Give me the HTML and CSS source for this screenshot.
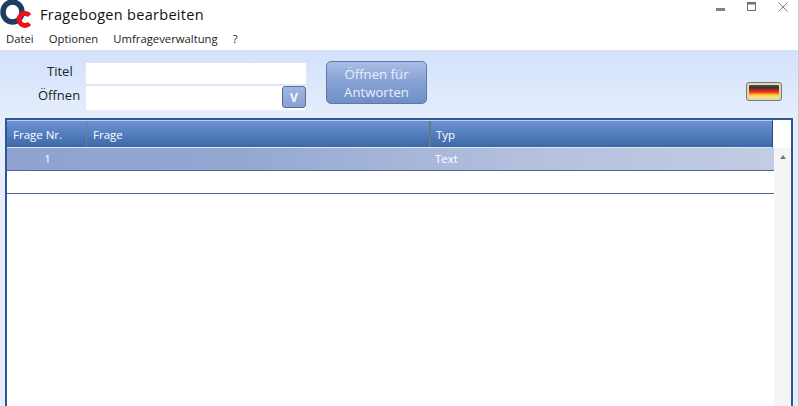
FILE: index.html
```html
<!DOCTYPE html>
<html lang="de">
<head>
    <meta charset="UTF-8">
    <title>Fragebogen bearbeiten</title>
    <link rel="stylesheet" href="styles.css">
</head>
<body>
    <div class="window">
        <div class="title-bar">
            <svg class="logo" width="32" height="30" viewBox="0 0 32 30">
                <ellipse cx="12.5" cy="12" rx="9.5" ry="10" fill="none" stroke="#1f3d63" stroke-width="5.5"/>
                <path d="M29.5 15.5 A6 6 0 1 0 29.5 23.5" fill="none" stroke="#ee1119" stroke-width="4.8"/>
            </svg>
            <span class="title-text">Fragebogen bearbeiten</span>
            <div class="window-buttons">
                <svg width="10" height="10" viewBox="0 0 10 10"><rect x="0" y="6" width="9" height="3" fill="#808080"/></svg>
                <svg width="10" height="10" viewBox="0 0 10 10"><rect x="0.5" y="0.5" width="8" height="8" fill="none" stroke="#707070"/><rect x="0.5" y="0.5" width="8" height="2" fill="#707070"/></svg>
                <svg width="10" height="10" viewBox="0 0 10 10"><path d="M0.5 0.5 L9.5 9.5 M9.5 0.5 L0.5 9.5" stroke="#808080" stroke-width="1"/></svg>
            </div>
        </div>
        <div class="menu-bar">
            <span>Datei</span>
            <span>Optionen</span>
            <span>Umfrageverwaltung</span>
            <span>?</span>
        </div>
        <div class="content">
            <div class="toolbar">
                <div class="fields">
                    <div class="field-row first">
                        <label>Titel</label>
                        <div class="input"></div>
                    </div>
                    <div class="field-row">
                        <label>Öffnen</label>
                        <div class="input">
                            <button class="drop-btn">V</button>
                        </div>
                    </div>
                </div>
                <button class="open-btn">Öffnen für Antworten</button>
                <div class="flag-btn"><div class="flag"></div></div>
            </div>
            <div class="grid-frame">
                <div class="grid-main">
                    <div class="grid-header">
                        <div class="col-nr">Frage Nr.</div>
                        <div class="col-frage">Frage</div>
                        <div class="col-typ">Typ</div>
                    </div>
                    <div class="grid-row selected">
                        <div class="col-nr num">1</div>
                        <div class="col-frage"></div>
                        <div class="col-typ">Text</div>
                    </div>
                    <div class="grid-row"></div>
                </div>
                <div class="scroll">
                    <div class="scroll-top"></div>
                    <div class="scroll-track"><span class="arrow"></span></div>
                </div>
            </div>
        </div>
    </div>
</body>
</html>
```

FILE: styles.css
```css
* {
    box-sizing: border-box;
}

html, body {
    margin: 0;
    height: 100%;
    overflow: hidden;
}

body {
    font-family: "Open Sans", Arial, sans-serif;
    background: #fff;
}

.window {
    width: 799px;
    height: 406px;
    display: flex;
    flex-direction: column;
    border-right: 1px solid #c8c8c8;
}

.title-bar {
    height: 31px;
    display: flex;
    align-items: flex-start;
    color: #111;
}

.logo {
    flex: none;
}

.title-text {
    margin: 5px 0 0 8px;
    font-size: 14.5px;
    letter-spacing: 0.3px;
}

.window-buttons {
    margin: 2px 0 0 auto;
    display: flex;
    gap: 21px;
    padding-right: 10px;
}

.menu-bar {
    height: 19px;
    display: flex;
    gap: 15px;
    padding-left: 6px;
    font-size: 11.3px;
    color: #222;
}

.content {
    flex: 1;
    display: flex;
    flex-direction: column;
    background: linear-gradient(#d3e1fb, #e6eefd 70px);
    min-height: 0;
}

.toolbar {
    height: 68px;
    display: flex;
    flex: none;
    padding-top: 13px;
}

.fields {
    width: 306px;
    display: flex;
    flex-direction: column;
    gap: 2px;
}

.field-row {
    display: flex;
    height: 24px;
}

.field-row.first {
    height: 21px;
}

.field-row label {
    width: 86px;
    font-size: 13px;
    color: #222;
}

.field-row.first label {
    padding-left: 47px;
    line-height: 16px;
}

.field-row:not(.first) label {
    padding-left: 38px;
    line-height: 19px;
}

.input {
    width: 220px;
    background: #fff;
    display: flex;
    justify-content: flex-end;
}

.drop-btn {
    width: 24px;
    height: 22px;
    padding: 0;
    border: 1px solid #5d6b8a;
    border-radius: 3px;
    background: linear-gradient(#a0b6e2, #86a1d6);
    color: #f6f8fe;
    font: bold 12px "Open Sans", sans-serif;
}

.open-btn {
    margin: -2px 0 0 20px;
    width: 101px;
    height: 43px;
    padding: 0 8px;
    border: 1px solid #64789f;
    border-radius: 5px;
    background: linear-gradient(#a9bde4, #88a3d6 45%, #6f8fc8);
    color: #e8eefb;
    font: 13.2px/18px "Open Sans", sans-serif;
}

.flag-btn {
    margin: 19px 0 0 319px;
    width: 36px;
    height: 19px;
    padding: 2px;
    border: 1px solid #7a7a6a;
    border-radius: 3px;
    background: #dcd8b8;
}

.flag {
    height: 100%;
    background: linear-gradient(#555, #333 18%, #cc2020 40%, #ea3a20 55%, #ffc830 75%, #ffe98a);
}

.grid-frame {
    flex: 1;
    display: flex;
    margin: 0 5px;
    background: #fff;
    border: solid #2f5597;
    border-width: 2px 2px 0;
    min-height: 0;
}

.grid-main {
    width: 767px;
}

.grid-header {
    height: 28px;
    display: flex;
    color: #fff;
    font-size: 11.5px;
    line-height: 27px;
    background: linear-gradient(#6c92d4, #3c69a8);
    border-top: 1px solid #bcd0ee;
    border-right: 1px solid #2c4a70;
    border-bottom: 1px solid #dfe6f2;
    margin-right: 1px;
}

.col-nr {
    width: 79px;
    padding-left: 6px;
    flex: none;
}

.col-frage {
    width: 343px;
    padding-left: 6px;
    flex: none;
}

.col-typ {
    flex: 1;
    padding-left: 6px;
}

.grid-header .col-frage {
    border-left: 1px solid #5d8a86;
}

.grid-header .col-typ {
    border-left: 2px solid #5d7f80;
    padding-left: 5px;
}

.grid-row {
    height: 23px;
    border-bottom: 1px solid #4f6491;
    display: flex;
    font-size: 11.5px;
    line-height: 22px;
    color: #fff;
}

.grid-row.selected {
    background: linear-gradient(90deg, #8ea3cf, #93a7d1 30%, #a6b6d9 52%, #b5c1de 70%, #c2cde3);
}

.num {
    text-align: center;
    padding-right: 4px;
}

.scroll {
    flex: 1;
    display: flex;
    flex-direction: column;
}

.scroll-top {
    height: 28px;
}

.scroll-track {
    flex: 1;
    background: #f5f5f5;
    display: flex;
    justify-content: center;
    padding-top: 7px;
}

.arrow {
    width: 0;
    height: 0;
    border: 3px solid transparent;
    border-top: 0;
    border-bottom: 4px solid #777;
}
```
